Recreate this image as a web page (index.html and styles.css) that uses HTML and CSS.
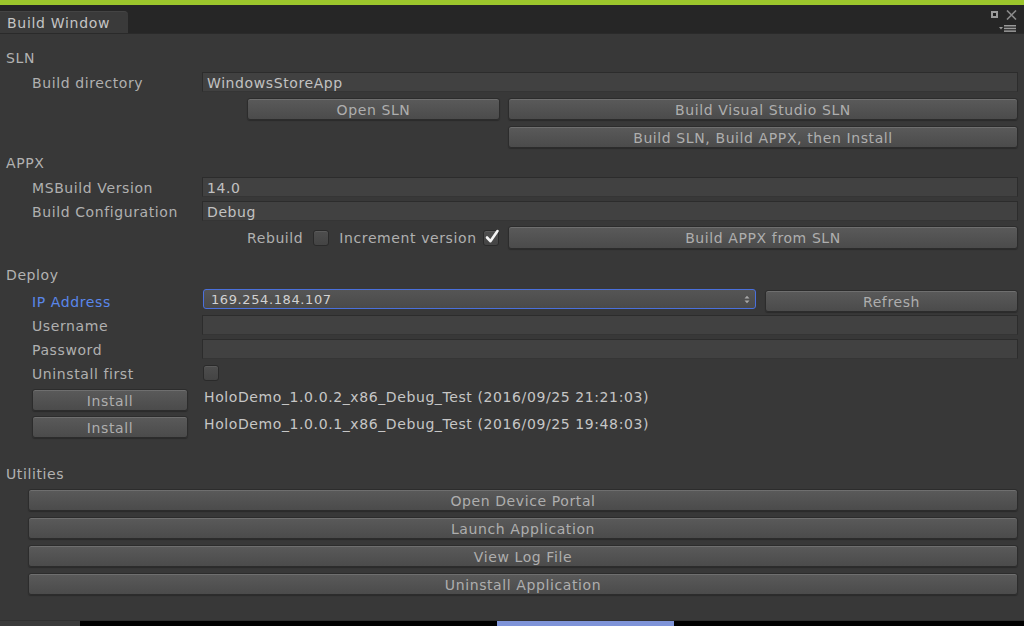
FILE: index.html
```html
<!DOCTYPE html>
<html>
<head>
<meta charset="utf-8">
<link rel="stylesheet" href="styles.css">
</head>
<body>
<div class="topbar"></div>
<div class="tabbar">
  <div class="tab">Build Window</div>
  <div class="tabicons">
    <div class="icrow">
      <span class="maxicon"></span>
      <svg class="closeicon" width="11" height="10" viewBox="0 0 11 10"><path d="M1 0.5 L10 9.5 M10 0.5 L1 9.5" stroke="#8a8a8a" stroke-width="1.6" fill="none"/></svg>
    </div>
    <svg class="menuicon" width="18" height="7" viewBox="0 0 18 7"><path d="M0 2 L4 2 L2 4.5 Z" fill="#9a9a9a"/><rect x="5" y="0" width="12" height="1.5" fill="#9a9a9a"/><rect x="5" y="2.7" width="12" height="1.5" fill="#9a9a9a"/><rect x="5" y="5.4" width="12" height="1.5" fill="#9a9a9a"/></svg>
  </div>
</div>
<div class="panel">
  <div class="header h-sln">SLN</div>
  <div class="row r-dir">
    <div class="label">Build directory</div>
    <div class="field">WindowsStoreApp</div>
  </div>
  <div class="row r-btn1">
    <div class="spacer"></div>
    <div class="content">
      <div class="leftgroup"><div class="btn">Open SLN</div></div>
      <div class="btn grow">Build Visual Studio SLN</div>
    </div>
  </div>
  <div class="row r-btn2">
    <div class="spacer"></div>
    <div class="content">
      <div class="leftgroup"></div>
      <div class="btn grow">Build SLN, Build APPX, then Install</div>
    </div>
  </div>

  <div class="header h-appx">APPX</div>
  <div class="row r-ms">
    <div class="label">MSBuild Version</div>
    <div class="field">14.0</div>
  </div>
  <div class="row r-cfg">
    <div class="label">Build Configuration</div>
    <div class="field">Debug</div>
  </div>
  <div class="row r-rebuild">
    <div class="spacer"></div>
    <div class="content">
      <div class="leftgroup opts">
        <span class="optlabel">Rebuild</span>
        <span class="check"></span>
        <span class="optlabel inc">Increment version</span>
        <span class="check checked"><svg width="18" height="18" viewBox="0 0 18 18"><path d="M4 9.5 L7.4 13.2 L14.5 3" stroke="#f4f4f4" stroke-width="2.6" fill="none" stroke-linecap="round" stroke-linejoin="round"/></svg></span>
      </div>
      <div class="btn grow">Build APPX from SLN</div>
    </div>
  </div>

  <div class="header h-deploy">Deploy</div>
  <div class="row r-ip">
    <div class="label blue">IP Address</div>
    <div class="content ipcontent">
      <div class="dropdown"><span>169.254.184.107</span><svg class="updown" width="6" height="9" viewBox="0 0 6 9"><path d="M0.5 3.5 L3 0.8 L5.5 3.5 Z M0.5 5.5 L3 8.2 L5.5 5.5 Z" fill="#a8a8a8"/></svg></div>
      <div class="btn refresh">Refresh</div>
    </div>
  </div>
  <div class="row r-user">
    <div class="label">Username</div>
    <div class="field"></div>
  </div>
  <div class="row r-pass">
    <div class="label">Password</div>
    <div class="field"></div>
  </div>
  <div class="row r-uninst">
    <div class="label">Uninstall first</div>
    <div class="content"><span class="check cb-uninst"></span></div>
  </div>
  <div class="row r-inst1">
    <div class="label"><div class="btn install">Install</div></div>
    <div class="content pkg">HoloDemo_1.0.0.2_x86_Debug_Test (2016/09/25 21:21:03)</div>
  </div>
  <div class="row r-inst2">
    <div class="label"><div class="btn install">Install</div></div>
    <div class="content pkg">HoloDemo_1.0.0.1_x86_Debug_Test (2016/09/25 19:48:03)</div>
  </div>

  <div class="header h-util">Utilities</div>
  <div class="utils">
    <div class="btn ubtn">Open Device Portal</div>
    <div class="btn ubtn">Launch Application</div>
    <div class="btn ubtn">View Log File</div>
    <div class="btn ubtn">Uninstall Application</div>
  </div>
</div>
<div class="footer">
  <div class="f-left"></div>
  <div class="f-mid"></div>
  <div class="f-blue"></div>
  <div class="f-rest"></div>
</div>
</body>
</html>
```
FILE: styles.css
```css
* { box-sizing: border-box; }
html, body {
  margin: 0;
  padding: 0;
  width: 1024px;
  height: 626px;
  overflow: hidden;
  background: #383838;
  font-family: "DejaVu Sans", "Liberation Sans", sans-serif;
  font-size: 14px;
  letter-spacing: 0.6px;
  color: #b0b0b0;
}
.topbar { height: 5px; background: #9cc62c; }
.tabbar {
  height: 29px;
  background: #262626;
  display: flex;
  align-items: flex-end;
  justify-content: space-between;
  border-bottom: 1px solid #2a2a2a;
}
.tab {
  width: 128px;
  height: 22px;
  background: #3a3a3a;
  border-top-right-radius: 4px;
  border-top: 1px solid #444;
  padding-left: 7px;
  padding-top: 1px;
  line-height: 20px;
  font-size: 14px;
  letter-spacing: 0.7px;
  color: #c4c4c4;
}
.tabicons {
  align-self: stretch;
  display: flex;
  flex-direction: column;
  align-items: flex-end;
  padding-right: 7px;
  padding-top: 4px;
}
.icrow { display: flex; align-items: center; gap: 8px; height: 11px; }
.maxicon {
  width: 7px; height: 7px;
  border: 1.5px solid #9a9a9a;
  background: #1e1e1e;
  box-shadow: inset 0 0 0 1px #9a9a9a;
}
.menuicon { margin-top: 5px; }

.panel {
  height: 587px;
  background: #383838;
  padding: 13px 6px 0 6px;
  border-bottom: 1px solid #303030;
}
.header {
  height: 20px;
  line-height: 22px;
  color: #b2b2b2;
}
.h-appx { margin-top: 4px; }
.h-deploy { margin-top: 15px; }
.h-util { margin-top: 26px; }

.row {
  display: flex;
  align-items: center;
}
.label {
  width: 196px;
  padding-left: 26px;
  flex: none;
  color: #b0b0b0;
  padding-top: 2px;
  white-space: nowrap;
}
.label.blue { color: #5a87ea; }
.spacer { width: 196px; flex: none; }
.content { flex: 1; display: flex; align-items: center; gap: 8px; height: 100%; }
.field {
  flex: 1;
  height: 20px;
  line-height: 20px;
  background: #414141;
  border: 1px solid #2c2c2c;
  border-bottom-color: #353535;
  padding-left: 4px;
  color: #c2c2c2;
}
.r-dir { margin-top: 5px; height: 20px; }
.r-btn1 { margin-top: 6px; height: 22px; }
.r-btn2 { margin-top: 6px; height: 22px; }
.r-ms { margin-top: 5px; height: 20px; }
.r-cfg { margin-top: 4px; height: 20px; }
.r-rebuild { margin-top: 5px; height: 23px; }
.r-ip { margin-top: 5px; height: 23px; }
.r-user { margin-top: 3px; height: 20px; }
.r-pass { margin-top: 4px; height: 20px; }
.r-uninst { margin-top: 4px; height: 20px; }
.r-inst1 { margin-top: 5px; height: 22px; }
.r-inst2 { margin-top: 5px; height: 22px; }

.leftgroup {
  width: 298px;
  padding-left: 45px;
  flex: none;
  display: flex;
  height: 100%;
}
.leftgroup .btn { flex: 1; }
.btn {
  height: 22px;
  line-height: 22px;
  text-align: center;
  background: linear-gradient(#5a5a5a, #4b4b4b);
  border: 1px solid #2c2c2c;
  border-radius: 3px;
  box-shadow: inset 0 1px 0 rgba(255,255,255,0.13), 0 1px 1px rgba(0,0,0,0.25);
  color: #aeaeae;
  white-space: nowrap;
}
.grow { flex: 1; }
.r-rebuild .btn { height: 23px; line-height: 23px; }

.opts { align-items: center; }
.optlabel { color: #b0b0b0; white-space: nowrap; }
.check {
  width: 16px; height: 16px;
  flex: none;
  background: linear-gradient(#4e4e4e, #444);
  border: 1px solid #2a2a2a;
  border-radius: 3px;
  box-shadow: inset 0 1px 0 rgba(255,255,255,0.08);
  position: relative;
}
.opts .check { margin-left: 10px; }
.opts .inc { margin-left: 10px; }
.opts .checked { margin-left: 6px; }
.check svg { position: absolute; left: -1px; top: -3px; }
.cb-uninst { margin-left: 1px; }

.ipcontent { gap: 9px; padding-left: 1px; }
.dropdown {
  width: 553px;
  height: 20px;
  align-self: flex-start;
  background: linear-gradient(#555, #4a4a4a);
  border: 1px solid #4a70dc;
  border-radius: 3px;
  display: flex;
  align-items: center;
  justify-content: space-between;
  padding: 0 5px 0 7px;
  color: #d2d2d2;
  font-size: 13px;
}
.updown { margin-top: 1px; }
.refresh { flex: 1; margin-top: 1px; height: 22px; }

.install { width: 156px; }
.pkg { color: #c6c6c6; padding-left: 2px; margin-top: -4px; white-space: nowrap; }

.utils {
  margin-top: 6px;
  padding-left: 22px;
  display: flex;
  flex-direction: column;
  gap: 6px;
}
.ubtn { width: 990px; }

.footer {
  height: 5px;
  display: flex;
  background: #000;
}
.f-left { width: 80px; background: #3a3a3a; }
.f-mid { width: 417px; }
.f-blue { width: 177px; background: #7e93d8; }
.f-rest { flex: 1; }
```
